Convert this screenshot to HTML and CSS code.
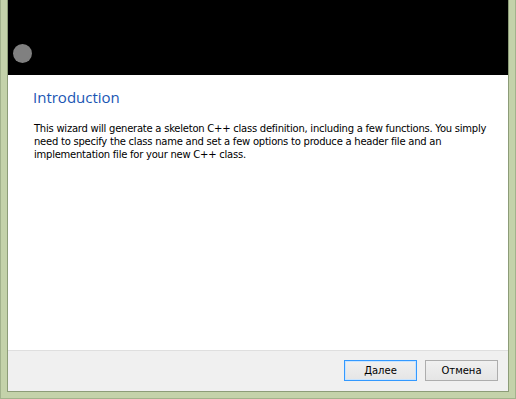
FILE: index.html
```html
<!DOCTYPE html>
<html>
<head>
  <title>Class Wizard</title>
  <link rel="stylesheet" href="styles.css">
</head>
<body>
  <div class="frame">
    <div class="dialog">
      <div class="wizard-header">
        <div class="wizard-logo"></div>
      </div>
      <div class="wizard-page">
        <h1 class="wizard-title">Introduction</h1>
        <p class="wizard-text">This wizard will generate a skeleton C++ class definition, including a few functions. You simply need to specify the class name and set a few options to produce a header file and an implementation file for your new C++ class.</p>
      </div>
      <div class="wizard-buttons">
        <button class="wizard-button wizard-button-default"><u>Д</u>алее</button>
        <button class="wizard-button">Отмена</button>
      </div>
    </div>
  </div>
</body>
</html>
```
FILE: styles.css
```css
html,body { padding: 0; margin: 0; }

.frame {
  box-sizing: border-box;
  width: 516px;
  height: 399px;
  padding: 0 6px 6px 6px;
  border: 1px solid #a2b28c;
  border-top: none;
  background: #c4d2aa;
  display: flex;
}

.dialog {
  flex-grow: 1;
  display: flex;
  flex-direction: column;
  border: 1px solid #8c9c78;
  border-top: none;
  background: #fff;
}

.wizard-header {
  height: 75px;
  box-sizing: border-box;
  padding: 44px 0 0 5px;
  background: #000;
}

.wizard-logo {
  width: 19px;
  height: 19px;
  border-radius: 50%;
  background: #808080;
}

.wizard-page {
  flex-grow: 1;
  padding: 12px 20px 0 25px;
  border-bottom: 1px solid #dfdfdf;
}

.wizard-title {
  margin: 0;
  font-family: "Open Sans", sans-serif;
  font-size: 15px;
  font-weight: normal;
  line-height: 20px;
  color: #1a56b4;
}

.wizard-text {
  margin: 15px 0 0 1px;
  font-family: "DejaVu Sans", sans-serif;
  font-size: 10px;
  letter-spacing: -0.24px;
  line-height: 13px;
  color: #000;
}

.wizard-buttons {
  height: 40px;
  box-sizing: border-box;
  padding: 9px 10px 0 0;
  background: #f0f0f0;
  display: flex;
  justify-content: flex-end;
  gap: 8px;
}

.wizard-button {
  width: 73px;
  height: 21px;
  padding: 0;
  font-family: "DejaVu Sans", sans-serif;
  font-size: 10px;
  color: #000;
  border: 1px solid #adadad;
  background: linear-gradient(#f0f0f0, #e5e5e5);
}

.wizard-button-default {
  border-color: #3399ff;
  box-shadow: inset 0 0 0 1px #c8e4ff;
}

.wizard-button u {
  text-decoration-thickness: 1px;
}
```
